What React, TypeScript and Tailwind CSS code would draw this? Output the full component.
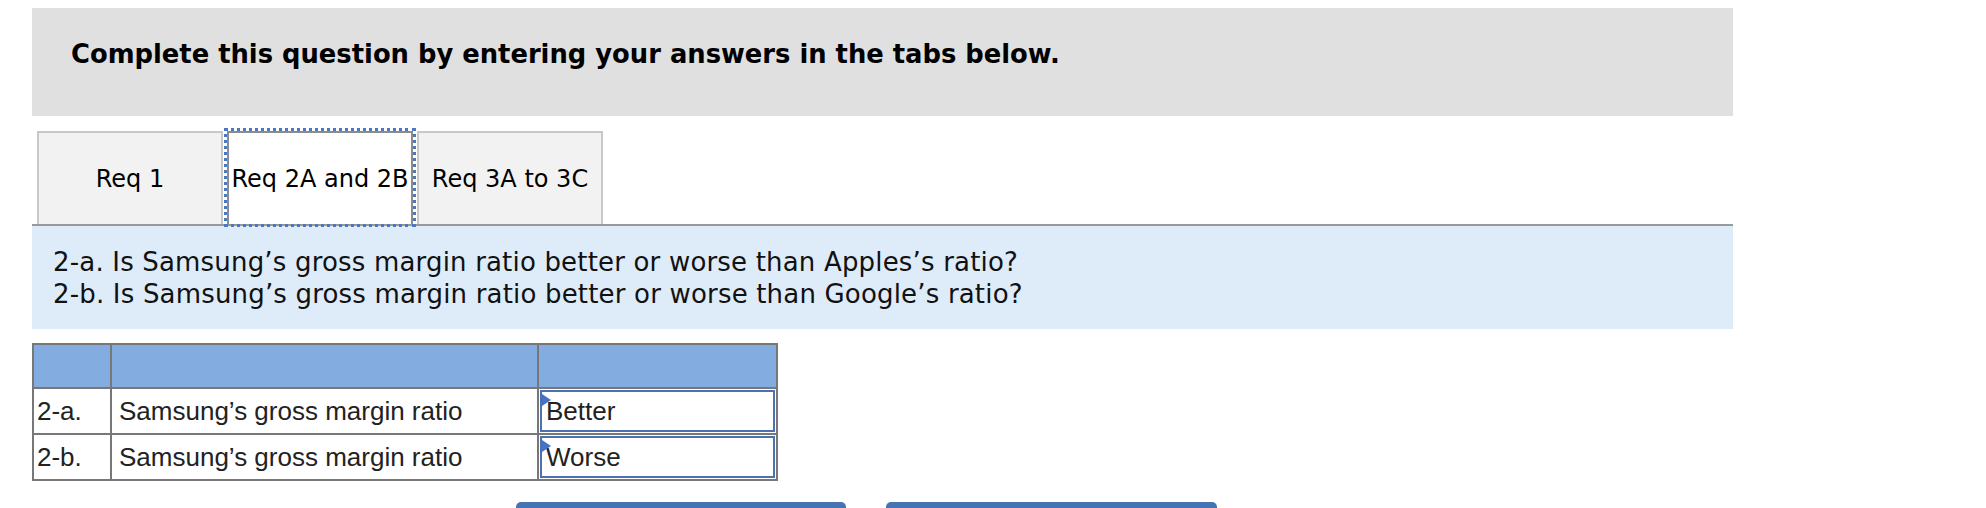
import React from 'react';

const tabs = ['Req 1', 'Req 2A and 2B', 'Req 3A to 3C'];

const rows = [
  { label: '2-a.', item: 'Samsung’s gross margin ratio', answer: 'Better' },
  { label: '2-b.', item: 'Samsung’s gross margin ratio', answer: 'Worse' },
];

const Corner: React.FC = () => (
  <svg className="absolute left-0 top-[2px]" width="9" height="12" viewBox="0 0 9 12">
    <path d="M0 0 L9 6 L0 12 Z" fill="#4472c4" />
  </svg>
);

const App: React.FC = () => {
  const active = 1;

  return (
    <div className="w-[1986px] h-[508px] overflow-hidden bg-white">
      <div className="ml-[32px] pt-[8px] w-[1701px]">
        {/* Instructions */}
        <div className="h-[108px] bg-[#e0e0e0] pl-[39px] pt-[30px]">
          <h2 className="font-['DejaVu_Sans',Verdana,sans-serif] font-bold text-[25.8px] leading-[32px] text-black">
            Complete this question by entering your answers in the tabs below.
          </h2>
        </div>

        {/* Tabs */}
        <div className="mt-[15px] flex gap-[4px] pl-[5px] border-b-2 border-[#999999]">
          {tabs.map((t, i) => (
            <div
              key={t}
              className={
                i === active
                  ? 'w-[186px] h-[93px] flex items-center justify-center bg-white border-2 border-b-0 border-[#8c8c8c] outline-[3px] outline-dotted outline-[#4a78c2] text-black'
                  : 'w-[186px] h-[93px] flex items-center justify-center bg-[#f2f2f2] border-2 border-b-0 border-[#c8c8c8] text-black'
              }
            >
              <span className="font-['DejaVu_Sans',Verdana,sans-serif] text-[24px] whitespace-nowrap">{t}</span>
            </div>
          ))}
        </div>

        {/* Question */}
        <div className="h-[103px] bg-[#deebf8] pl-[21px] pt-[20px] font-['DejaVu_Sans',Verdana,sans-serif] text-[26px] tracking-[0.18px] leading-[32px] text-[#111]">
          <p>2-a. Is Samsung’s gross margin ratio better or worse than Apples’s ratio?</p>
          <p>2-b. Is Samsung’s gross margin ratio better or worse than Google’s ratio?</p>
        </div>

        {/* Answer table */}
        <table className="mt-[14px] border-collapse font-['Liberation_Sans',Arial,sans-serif] text-[26px] text-[#222]">
          <thead>
            <tr className="h-[44px] bg-[#83ade0]">
              <th className="w-[78px] border-2 border-[#777777]" />
              <th className="w-[427px] border-2 border-[#777777]" />
              <th className="w-[239px] border-2 border-[#777777]" />
            </tr>
          </thead>
          <tbody>
            {rows.map((r) => (
              <tr key={r.label} className="h-[46px]">
                <td className="border-2 border-[#777777] pl-[3px] leading-none">{r.label}</td>
                <td className="border-2 border-[#777777] pl-[7px] leading-none">{r.item}</td>
                <td className="border-2 border-[#777777] p-[1px]">
                  <div className="relative h-[42px] border-2 border-[#4a72b0] flex items-center pl-[4px] leading-none">
                    <Corner />
                    {r.answer}
                  </div>
                </td>
              </tr>
            ))}
          </tbody>
        </table>

        {/* Buttons */}
        <div className="mt-[21px] flex gap-[40px] pl-[484px]">
          <button className="w-[330px] h-[40px] rounded-t-[5px] bg-[#4673b2]" />
          <button className="w-[331px] h-[40px] rounded-t-[5px] bg-[#4673b2]" />
        </div>
      </div>
    </div>
  );
};

export default App;
